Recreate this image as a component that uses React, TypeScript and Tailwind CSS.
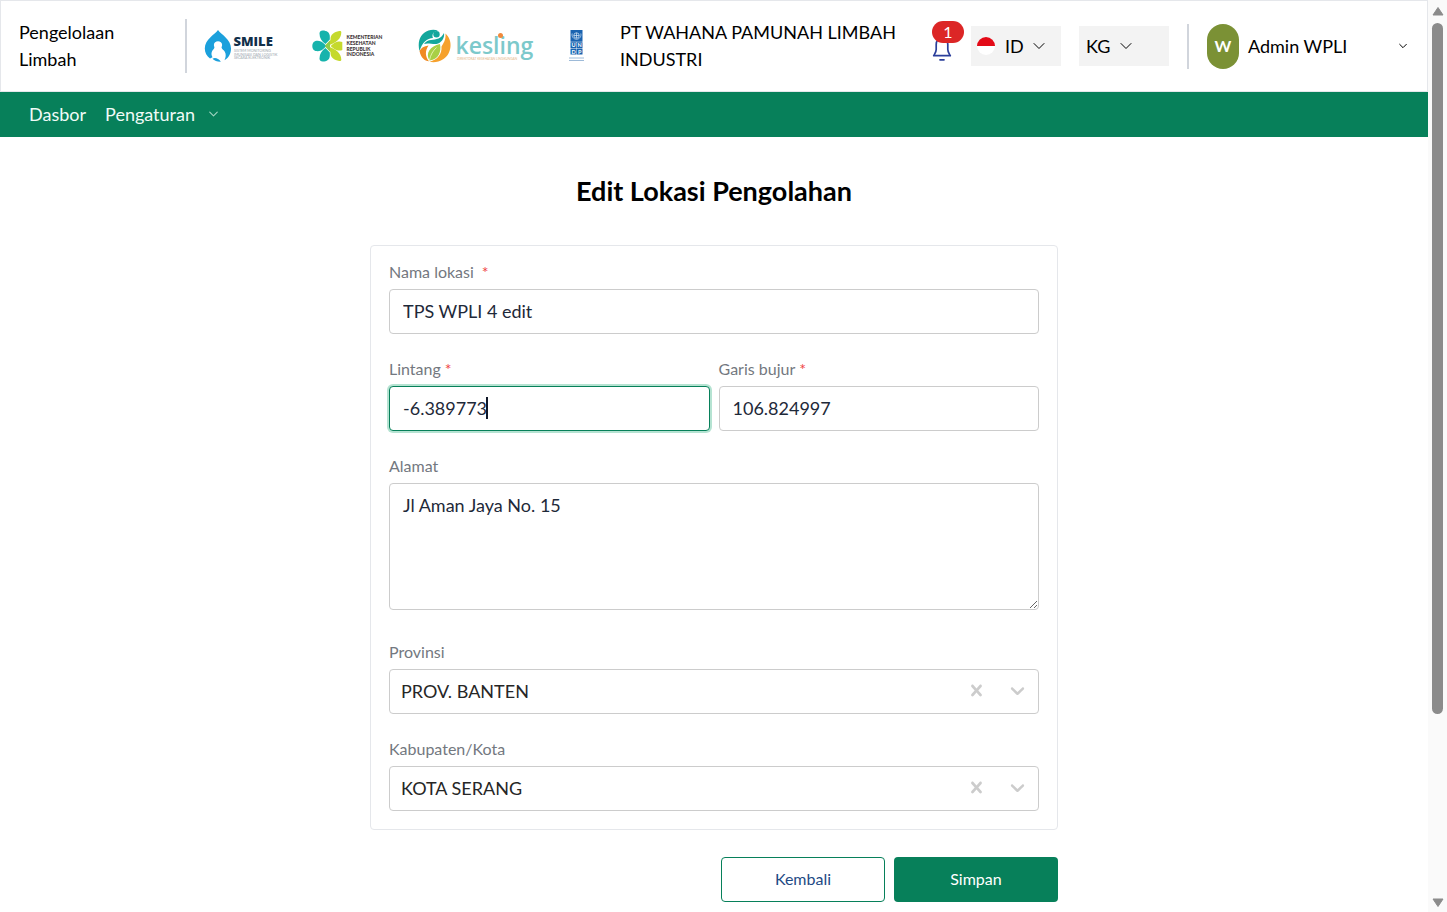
import { useState, type ReactNode } from "react";

function Chevron({ className }: { className: string }) {
  return (
    <svg viewBox="0 0 12 8" className={className} fill="none" stroke="currentColor" aria-hidden="true">
      <path d="M1 1.5 6 6.5 11 1.5" strokeLinecap="round" strokeLinejoin="round" />
    </svg>
  );
}

function SmileLogo() {
  return (
    <svg viewBox="0 0 74 36" className="h-9 w-[74px] shrink-0" role="img" aria-label="SMILE">
      <path
        fill="#1ba0dc"
        d="M14 2C17 6.500 27 11 27 20.500C27 26 24.500 30 20.500 32.300C21.800 29.500 22.300 26.500 20.800 23.800C19.800 22 18 21.300 17.600 19.800C17.400 18.800 18.200 18.200 18.100 16.700C18 14.600 16.200 13.300 14 13.300C11.800 13.300 10 14.600 9.900 16.700C9.800 18.200 10.600 18.800 10.400 19.800C10 21.300 8.300 22.200 7.700 24.200C7.200 26 7.600 27.500 8.500 29.300L6 30.500C2.800 28.300 .800 24.800 .800 20.500C.800 11 11 6.500 14 2Z"
      />
      <path fill="#1ba0dc" d="M8.500 30.800C11 29.200 14.500 30.500 16.800 33.800C13.500 34 10.500 32.800 8.500 30.800Z" />
      <text x="29.500" y="18" fill="#12304a" fontFamily="'Open Sans', sans-serif" fontWeight="800" fontSize="13">
        SMILE
      </text>
      <g fill="#9aa5ad" fontFamily="Lato, sans-serif" fontSize="3.600">
        <text x="30" y="24">SISTEM MONITORING</text>
        <text x="30" y="27.500">IMUNISASI DAN LOGISTIK</text>
        <text x="30" y="31">SECARA ELEKTRONIK</text>
      </g>
    </svg>
  );
}

function KemenkesLogo() {
  return (
    <svg viewBox="0 0 72 36" className="h-9 w-[72px] shrink-0" role="img" aria-label="Kementerian Kesehatan Republik Indonesia">
      <g fill="#16b3ac">
        <path d="M7.500 5.500C7.500 3.500 8.800 2.500 10.700 2.500C14.800 2.500 17.800 4.500 17.800 8.500L17.800 11.500L13.500 16C9.800 13.500 7.500 10 7.500 5.500Z" />
        <path d="M.300 18C.300 14.500 2.500 12.800 5.500 12.800C8 12.800 10.200 14 12.200 15.800L14.500 18L12.200 20.200C10.200 22 8 23.200 5.500 23.200C2.500 23.200 .300 21.500 .300 18Z" />
        <path d="M7.500 30.500C7.500 32.500 8.800 33.500 10.700 33.500C14.800 33.500 17.800 31.500 17.800 27.500L17.800 24.500L13.500 20C9.800 22.500 7.500 26 7.500 30.500Z" />
      </g>
      <g fill="#c5d92d">
        <path d="M29.300 4.500C29.300 3.200 28.500 2.800 27.200 3C22 4 18.500 6.500 18.500 11L18.500 12L13.500 17.200L17 17.300C24 14.500 29.300 11 29.300 4.500Z" />
        <path d="M18.500 18L22.500 14.800C25 13.400 28.500 13 30.300 14L30.300 22C28.500 23 25 22.600 22.500 21.200Z" />
        <path d="M29.300 31.500C29.300 32.800 28.500 33.200 27.200 33C22 32 18.500 29.500 18.500 25L18.500 24L13.500 18.800L17 18.700C24 21.500 29.300 25 29.300 31.500Z" />
      </g>
      <path d="M12.800 18 18 12.600V23.400Z" fill="#8fcb4a" />
      <g fill="#3d3436" fontFamily="Lato, sans-serif" fontWeight="900" fontSize="5">
        <text x="34.500" y="11">KEMENTERIAN</text>
        <text x="34.500" y="16.800">KESEHATAN</text>
        <text x="34.500" y="22.500">REPUBLIK</text>
        <text x="34.500" y="28.200">INDONESIA</text>
      </g>
    </svg>
  );
}

function KeslingLogo() {
  return (
    <svg viewBox="0 0 116 36" className="h-9 w-[116px] shrink-0" role="img" aria-label="kesling">
      <path fill="#13a79c" d="M1.500 23C-1 14 2.500 5 10.500 2.500C13.500 1.500 17 1.500 20 2.500C15 3.500 13.500 7 15 10C9 10 4 15 1.500 23Z" />
      <circle cx="18.500" cy="6.300" r="3.200" fill="#13a79c" />
      <path fill="#13a79c" d="M6 16C10 10.500 16 12.500 20.500 10.500C23 9.500 25 7 26 5C27 10 23 15.500 18.500 16C14.500 16.500 10 14.500 6 16Z" />
      <path fill="#f6a12c" d="M27.500 5.500C35.500 12.500 33.500 26 25.500 31C20.500 34.300 15.500 34.700 11.500 33.700C20 31.500 24 26 23.500 18.500C25.500 15 28 12 27.500 5.500Z" />
      <path fill="#f08a24" d="M1.500 23C3 30 6.500 32.800 11 33.300C7 28.500 7 22.500 10.500 17.500C6 18 3 20 1.500 23Z" />
      <path fill="#a8cf45" d="M22 16C23.500 23 21 31.500 11.500 32.500C7 25.500 12 18 22 16Z" />
      <path fill="none" stroke="#e9f5b5" strokeWidth=".9" d="M11.500 32C12.500 27 15 22.500 18.500 19.500" />
      <text x="37.500" y="26" fill="#7cc9cb" fontFamily="'Open Sans', sans-serif" fontWeight="600" fontSize="23">
        kesling
      </text>
      <circle cx="82.500" cy="7.500" r="2.500" fill="#f08a3c" />
      <text x="39" y="31.500" fill="#e5b78a" fontFamily="Lato, sans-serif" fontSize="3.200">
        DIREKTORAT KESEHATAN LINGKUNGAN
      </text>
    </svg>
  );
}

function UndpLogo() {
  return (
    <svg viewBox="0 0 17 36" className="h-9 w-[17px] shrink-0" role="img" aria-label="UNDP">
      <path fill="#1a63b0" d="M2.500 2H14.500V13.700H2.500ZM2.500 14.200H8.300V20.100H2.500ZM8.700 14.200H14.500V20.100H8.700ZM2.500 20.500H8.300V26.500H2.500ZM8.700 20.500H14.500V26.500H8.700Z" />
      <g fill="none" stroke="#dcebf8" strokeWidth=".7">
        <circle cx="8.500" cy="7.500" r="2.700" />
        <path d="M5.800 7.500H11.200M8.500 4.800V10.200M4.200 5.500C3.500 8.500 5.300 11 8.500 11.300C11.700 11 13.500 8.500 12.800 5.500" />
      </g>
      <g fill="#fff" fontFamily="Lato, sans-serif" fontWeight="700" fontSize="5.500">
        <text x="3.400" y="19.200">U</text>
        <text x="9.500" y="19.200">N</text>
        <text x="3.400" y="25.600">D</text>
        <text x="9.900" y="25.600">P</text>
      </g>
      <path stroke="#9dbad8" strokeWidth="1" d="M1 30H16M1 32.500H16" />
    </svg>
  );
}

function Bell() {
  return (
    <button type="button" aria-label="Notifikasi" className="relative h-[40px] w-5 shrink-0">
      <svg viewBox="0 0 20 26" className="mt-[6px] h-[26px] w-5" fill="none" stroke="#2b3f9b" strokeWidth="1.700" strokeLinecap="round" strokeLinejoin="round" aria-hidden="true">
        <path d="M10 2.500C6.500 2.500 4.200 5 4.200 8.500V13.500C4.200 16 2.800 17.500 1.700 19.700H18.300C17.200 17.500 15.800 16 15.800 13.500V8.500C15.800 5 13.500 2.500 10 2.500Z" />
        <path d="M8 23.800H12" />
      </svg>
      <span className="absolute -top-[5px] left-0 flex h-[22px] w-8 items-center justify-center rounded-full bg-[#dc2626] text-base text-white">
        1
      </span>
    </button>
  );
}

function Header() {
  return (
    <header className="flex items-center border border-gray-200 py-[18px] pr-5 pl-[18px] text-lg leading-[27px] text-black">
      <p className="w-[120px] shrink-0">Pengelolaan Limbah</p>
      <div className="ml-[46px] h-[54px] w-[2px] shrink-0 bg-gray-300" />
      <div className="ml-[17px] flex shrink-0 items-center gap-[34px]">
        <SmileLogo />
        <KemenkesLogo />
        <KeslingLogo />
        <UndpLogo />
      </div>
      <p className="ml-[35px] min-w-0 flex-1 pr-4">PT WAHANA PAMUNAH LIMBAH INDUSTRI</p>
      <Bell />
      <div className="ml-[19px] flex h-10 w-[90px] shrink-0 items-center bg-[#f3f3f3] pl-[6px]">
        <svg viewBox="0 0 18 18" className="size-[18px]" aria-hidden="true">
          <circle cx="9" cy="9" r="9" fill="#fff" />
          <path d="M0 9A9 9 0 0 1 18 9Z" fill="#e30a17" />
        </svg>
        <select aria-label="Bahasa" defaultValue="ID" className="ml-[10px] appearance-none bg-transparent">
          <option>ID</option>
        </select>
        <Chevron className="ml-[9px] h-2 w-3" />
      </div>
      <div className="ml-[18px] flex h-10 w-[90px] shrink-0 items-center bg-[#f3f3f3] pl-[7px]">
        <select aria-label="Satuan" defaultValue="KG" className="appearance-none bg-transparent">
          <option>KG</option>
        </select>
        <Chevron className="ml-[9px] h-2 w-3" />
      </div>
      <div className="ml-[18px] h-[45px] w-[2px] shrink-0 bg-gray-300" />
      <button type="button" className="ml-[18px] flex w-[200px] shrink-0 items-center text-left">
        <span className="flex h-[45px] w-8 items-center justify-center rounded-full bg-[#7b9135] text-base font-bold text-white">W</span>
        <span className="ml-[9px] flex-1">Admin WPLI</span>
        <Chevron className="h-[6px] w-2 stroke-[1.500]" />
      </button>
    </header>
  );
}

function Field({ id, label, required, wide, children }: { id: string; label: string; required?: boolean; wide?: boolean; children: ReactNode }) {
  return (
    <div className="flex min-w-0 flex-1 flex-col gap-[9px]">
      <label htmlFor={id} className="text-base leading-4 text-[#737880]">
        {label}
        {required && <span className={wide ? "ml-2 text-[#ef4444]" : "ml-1 text-[#ef4444]"}>*</span>}
      </label>
      {children}
    </div>
  );
}

const box = "w-full rounded border border-[#ccc] bg-white px-[13px] text-lg text-gray-800 outline-none";

function Combo({ id, options }: { id: string; options: string[] }) {
  const [value, setValue] = useState(options[0]);
  return (
    <div className="flex h-[45px] items-center rounded border border-[#ccc] pb-[2px] text-[#ccc]">
      <select
        id={id}
        value={value}
        onChange={(e) => setValue(e.target.value)}
        className="h-full min-w-0 flex-1 appearance-none bg-transparent pl-[11px] text-lg text-[#262626] outline-none"
      >
        <option value="" />
        {options.map((o) => (
          <option key={o}>{o}</option>
        ))}
      </select>
      <button type="button" aria-label="Hapus pilihan" onClick={() => setValue("")} className="px-[9px]">
        <svg viewBox="0 0 20 20" className="size-[23px]" fill="currentColor" aria-hidden="true">
          <path d="M14.348 14.849c-0.469 0.469-1.229 0.469-1.697 0l-2.651-3.030-2.651 3.029c-0.469 0.469-1.229 0.469-1.697 0-0.469-0.469-0.469-1.229 0-1.697l2.758-3.15-2.759-3.152c-0.469-0.469-0.469-1.228 0-1.697s1.228-0.469 1.697 0l2.652 3.031 2.651-3.031c0.469-0.469 1.228-0.469 1.697 0s0.469 1.229 0 1.697l-2.758 3.152 2.758 3.15c0.469 0.469 0.469 1.229 0 1.698z" />
        </svg>
      </button>
      <span className="px-[9px]">
        <svg viewBox="0 0 20 20" className="size-[23px]" fill="currentColor" aria-hidden="true">
          <path d="M4.516 7.548c0.436-0.446 1.043-0.481 1.576 0l3.908 3.747 3.908-3.747c0.533-0.481 1.141-0.446 1.574 0 0.436 0.445 0.408 1.197 0 1.615-0.406 0.418-4.695 4.502-4.695 4.502-0.217 0.223-0.502 0.335-0.787 0.335s-0.57-0.112-0.789-0.335c0 0-4.287-4.084-4.695-4.502s-0.436-1.17 0-1.615z" />
        </svg>
      </span>
    </div>
  );
}

function LocationForm() {
  return (
    <form className="mx-auto mt-9 w-full max-w-[688px]" onSubmit={(e) => e.preventDefault()}>
      <div className="flex flex-col gap-[27px] rounded border border-gray-200 p-[18px]">
        <Field id="nama" label="Nama lokasi" required wide>
          <input id="nama" defaultValue="TPS WPLI 4 edit" className={`${box} h-[45px] pb-[2px]`} />
        </Field>
        <div className="flex gap-[9px]">
          <Field id="lintang" label="Lintang" required>
            <div className="relative">
              <input
                id="lintang"
                defaultValue="-6.389773"
                className="block h-[45px] w-full rounded border border-[#07805a] bg-white px-[13px] pb-[2px] text-lg text-gray-800 caret-transparent ring-2 ring-[#b5e3d2] outline-none"
              />
              <span className="absolute top-[11px] left-[97px] h-[22px] w-[2px] bg-gray-900" />
            </div>
          </Field>
          <Field id="bujur" label="Garis bujur" required>
            <input id="bujur" defaultValue="106.824997" className={`${box} h-[45px] pb-[2px]`} />
          </Field>
        </div>
        <div className="flex pb-[7px]">
          <Field id="alamat" label="Alamat">
            <textarea id="alamat" defaultValue="Jl Aman Jaya No. 15" className={`${box} block h-[127px] resize py-2 leading-[27px]`} />
          </Field>
        </div>
        <Field id="provinsi" label="Provinsi">
          <Combo id="provinsi" options={["PROV. BANTEN"]} />
        </Field>
        <Field id="kota" label="Kabupaten/Kota">
          <Combo id="kota" options={["KOTA SERANG"]} />
        </Field>
      </div>
      <div className="mt-[27px] flex justify-end gap-[9px] text-base">
        <button type="button" className="h-[45px] w-[164px] rounded border border-[#07805a] pb-[2px] text-[#1f4a85]">
          Kembali
        </button>
        <button type="submit" className="h-[45px] w-[164px] rounded bg-[#07805a] pb-[2px] text-white">
          Simpan
        </button>
      </div>
    </form>
  );
}

function ScrollRail() {
  return (
    <div className="sticky top-0 flex h-screen w-[19px] shrink-0 flex-col items-center bg-[#fafafa] pt-[6px] pb-1 text-[#8b8b8b]" aria-hidden="true">
      <svg viewBox="0 0 12 10" className="h-[10px] w-3" fill="currentColor" stroke="currentColor" strokeLinejoin="round">
        <path d="M6 1.500 11 9H1Z" />
      </svg>
      <div className="mt-[7px] flex w-full flex-1 justify-center">
        <div className="h-[79%] w-[11px] rounded-full bg-current" />
      </div>
      <svg viewBox="0 0 12 10" className="h-[10px] w-3" fill="currentColor" stroke="currentColor" strokeLinejoin="round">
        <path d="M6 8.500 11 1H1Z" />
      </svg>
    </div>
  );
}

export default function App() {
  return (
    <div className="flex min-h-screen bg-white font-['Lato',sans-serif]">
      <div className="min-w-0 flex-1">
        <Header />
        <nav className="flex h-[45px] items-center bg-[#07805a] px-[29px] pb-[2px] text-lg text-[#f0fbf7]">
          <a href="#dasbor">Dasbor</a>
          <a href="#pengaturan" className="ml-[19px] flex items-center">
            Pengaturan
            <Chevron className="ml-[14px] h-[6px] w-[9px] stroke-[1.500] text-[#9fd3c0]" />
          </a>
        </nav>
        <main>
          <h1 className="mt-9 text-center text-[27px] leading-9 font-bold text-black">Edit Lokasi Pengolahan</h1>
          <LocationForm />
        </main>
      </div>
      <ScrollRail />
    </div>
  );
}
